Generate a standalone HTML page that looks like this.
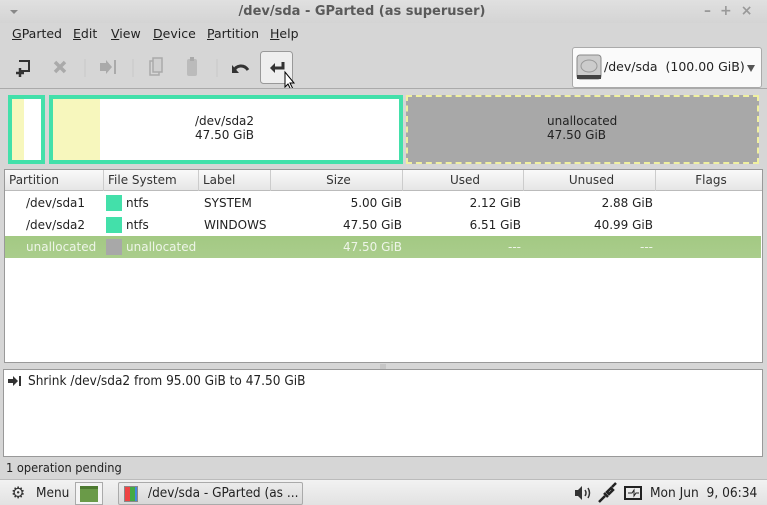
<!DOCTYPE html>
<html><head><meta charset="utf-8"><style>
*{box-sizing:border-box;margin:0;padding:0}
body{width:767px;height:505px;overflow:hidden;background:#d6d6d6;font-family:"DejaVu Sans","Liberation Sans",sans-serif;font-size:12px;color:#222;position:relative}
.a{position:absolute}
.menu span{position:absolute;top:26px;font-size:12.5px;color:#222}
.menu u{text-decoration:underline}
.th{position:absolute;top:0;height:21px;line-height:21px;border-right:1px solid #ccc;padding-left:4px;font-size:12px;color:#333}
.row{position:absolute;left:5px;width:756px;height:22px;line-height:22px;font-size:12px}
.row span{position:absolute}
.r{text-align:right}
.sw{position:absolute;width:16px;height:16px;top:3px}
.tb{font-family:"DejaVu Sans Condensed","DejaVu Sans",sans-serif;font-size:12px}
</style></head><body>
<!-- title -->
<div class="a" style="left:0;top:0;width:767px;height:23px;background:linear-gradient(#e0e0e0,#d4d4d4)"></div>
<div class="a" style="left:10px;top:10px;width:0;height:0;border-left:4px solid transparent;border-right:4px solid transparent;border-top:4px solid #888"></div>
<div class="a" style="left:0;top:4px;width:724px;text-align:center;font-weight:bold;font-size:13px;color:#5a5a5a">/dev/sda - GParted (as superuser)</div>
<div class="a" style="left:704px;top:3px;color:#999;font-size:14px;font-weight:bold;letter-spacing:9px">–+×</div>
<!-- menu -->
<div class="menu">
<span style="left:12px"><u>G</u>Parted</span><span style="left:73px"><u>E</u>dit</span><span style="left:111px"><u>V</u>iew</span><span style="left:153px"><u>D</u>evice</span><span style="left:207px"><u>P</u>artition</span><span style="left:270px"><u>H</u>elp</span>
</div>
<!-- toolbar -->
<svg class="a" style="left:0;top:45px" width="310" height="45">
<g fill="none" stroke="#333" stroke-width="2"><path d="M19 16h10v10h-8"/></g>
<path d="M20 23v9M16 28h8" stroke="#333" stroke-width="2.5"/>
<path d="M55 17l10 10M65 17l-10 10" stroke="#aaa" stroke-width="3.5"/>
<line x1="85" y1="14" x2="85" y2="32" stroke="#c8c8c8"/>
<path d="M100 18h6v-3l6 7-6 7v-3h-6z" fill="#aaa"/><rect x="114" y="15" width="2" height="14" fill="#aaa"/>
<line x1="133" y1="14" x2="133" y2="32" stroke="#c8c8c8"/>
<rect x="150" y="16" width="9" height="14" fill="none" stroke="#aaa" stroke-width="1.5"/><rect x="153" y="13" width="9" height="14" fill="#d0d0d0" stroke="#aaa" stroke-width="1.5"/>
<rect x="187" y="14" width="10" height="17" rx="2" fill="#bbb"/><rect x="190" y="12" width="4" height="4" fill="#aaa"/>
<line x1="217" y1="14" x2="217" y2="32" stroke="#c8c8c8"/>
<path d="M234 26c2-6 10-7 14 -1" fill="none" stroke="#333" stroke-width="3"/><path d="M232 20v8h7z" fill="#333"/>
<rect x="260.5" y="6.5" width="32" height="32" rx="3" fill="#eee" stroke="#999"/>
<path d="M283 17v6h-10" fill="none" stroke="#333" stroke-width="3"/><path d="M275 18l-5 5 5 5z" fill="#333"/>
<path d="M285 27v15l3-3 3 6 2-1-3-6h4z" fill="#fff" stroke="#000"/>
</svg>
<!-- device combo -->
<div class="a" style="left:572px;top:47px;width:190px;height:41px;background:#fafafa;border:1px solid #aaa;border-radius:3px"></div>
<svg class="a" style="left:575px;top:52px" width="30" height="30"><rect x="2" y="3" width="24" height="24" rx="3" fill="#ccc" stroke="#888"/><ellipse cx="14" cy="14" rx="8" ry="6" fill="none" stroke="#999"/><rect x="2" y="23" width="24" height="4" fill="#444"/></svg>
<div class="a" style="left:604px;top:59px;font-size:12.5px">/dev/sda &nbsp;(100.00 GiB)</div>
<div class="a" style="left:747px;top:65px;border-left:4px solid transparent;border-right:4px solid transparent;border-top:7px solid #555"></div>
<div class="a" style="left:0;top:88px;width:767px;height:1px;background:#aaa"></div>
<!-- map -->
<div class="a" style="left:3px;top:89px;width:761px;height:78px;background:#d6d6d6"></div>
<div class="a" style="left:8px;top:95px;width:37px;height:69px;border:4px solid #43e0aa;background:linear-gradient(90deg,#f7f7bd 0 12px,#fff 12px)"></div>
<div class="a" style="left:49px;top:95px;width:354px;height:69px;border:4px solid #43e0aa;background:linear-gradient(90deg,#f7f7bd 0 47px,#fff 47px)"></div>
<div class="a" style="left:195px;top:114px;font-size:12px;line-height:14px">/dev/sda2<br>47.50 GiB</div>
<div class="a" style="left:406px;top:95px;width:353px;height:69px;border:2px dashed #f0f0a0;background:#a8a8a8"></div>
<div class="a" style="left:547px;top:114px;font-size:12px;line-height:14px">unallocated<br>47.50 GiB</div>
<!-- table -->
<div class="a" style="left:4px;top:169px;width:759px;height:194px;background:#fff;border:1px solid #999"></div>
<div class="a" style="left:5px;top:170px;width:757px;height:21px;background:linear-gradient(#fafafa,#e6e6e6);border-bottom:1px solid #bbb">
<div class="th" style="left:0;width:99px">Partition</div>
<div class="th" style="left:99px;width:95px">File System</div>
<div class="th" style="left:194px;width:72px">Label</div>
<div class="th" style="left:266px;width:132px;text-align:center">Size</div>
<div class="th" style="left:398px;width:121px;text-align:center">Used</div>
<div class="th" style="left:519px;width:132px;text-align:center">Unused</div>
<div class="th" style="left:651px;width:106px;text-align:center;border:0">Flags</div>
</div>
<div class="row" style="top:192px"><span style="left:21px">/dev/sda1</span><i class="sw" style="left:101px;background:#43e0aa"></i><span style="left:121px">ntfs</span><span style="left:199px">SYSTEM</span><span class="r" style="right:359px">5.00 GiB</span><span class="r" style="right:240px">2.12 GiB</span><span class="r" style="right:108px">2.88 GiB</span></div>
<div class="row" style="top:214px"><span style="left:21px">/dev/sda2</span><i class="sw" style="left:101px;background:#43e0aa"></i><span style="left:121px">ntfs</span><span style="left:199px">WINDOWS</span><span class="r" style="right:359px">47.50 GiB</span><span class="r" style="right:240px">6.51 GiB</span><span class="r" style="right:108px">40.99 GiB</span></div>
<div class="row" style="top:236px;background:linear-gradient(#a3c983,#aacd8c);color:#eef5e8"><span style="left:21px">unallocated</span><i class="sw" style="left:101px;background:#a8a8a8"></i><span style="left:121px">unallocated</span><span class="r" style="right:359px">47.50 GiB</span><span class="r" style="right:240px">---</span><span class="r" style="right:108px">---</span></div>
<div class="a" style="left:380px;top:364px;font-size:6px;color:#999">|||</div>
<!-- ops -->
<div class="a" style="left:3px;top:369px;width:760px;height:88px;background:#fff;border:1px solid #999"></div>
<svg class="a" style="left:7px;top:374px" width="16" height="14"><path d="M1 5h5v-3l5 5-5 5v-3h-5z" fill="#333"/><rect x="12" y="2" width="2" height="10" fill="#333"/></svg>
<div class="a tb" style="left:28px;top:373px;font-size:13.5px">Shrink /dev/sda2 from 95.00 GiB to 47.50 GiB</div>
<div class="a tb" style="left:6px;top:460px;font-size:12.7px">1 operation pending</div>
<!-- taskbar -->
<div class="a" style="left:0;top:479px;width:767px;height:26px;background:linear-gradient(#f2f2f2,#e2e2e2);border-top:1px solid #bbb"></div>
<div class="a" style="left:11px;top:483px;font-size:16px;color:#333">⚙</div>
<div class="a tb" style="left:36px;top:485px;font-size:13.5px">Menu</div>
<div class="a" style="left:75px;top:482px;width:28px;height:23px;border:1px solid #aaa;background:#f4f4f4"><div style="margin:3px 4px;height:16px;background:#6a9a48;border-top:3px solid #4d7a30"></div></div>
<div class="a" style="left:118px;top:482px;width:185px;height:23px;border:1px solid #aaa;border-radius:2px;background:linear-gradient(#ececec,#d8d8d8)"></div>
<div class="a" style="left:124px;top:486px;width:14px;height:16px;background:linear-gradient(90deg,#e44 0 5px,#4a4 5px 10px,#48d 10px);border:1px solid #888"></div>
<div class="a tb" style="left:148px;top:485px;font-size:13.5px">/dev/sda - GParted (as ...</div>
<svg class="a" style="left:573px;top:485px" width="22" height="16"><path d="M2 5h3l4-4v14l-4-4h-3z" fill="#333"/><path d="M12 5q2 3 0 6M15 3q3 5 0 10" stroke="#333" stroke-width="1.5" fill="none"/></svg>
<svg class="a" style="left:596px;top:482px" width="22" height="22"><path d="M3 20l6-6M8 11l4 4M11 10l4-4 2 2-4 4zM16 5l4-4" stroke="#222" stroke-width="2.5" fill="none"/></svg>
<svg class="a" style="left:624px;top:485px" width="20" height="16"><rect x="1" y="2" width="16" height="12" fill="none" stroke="#222" stroke-width="2"/><path d="M4 8h4l2-3v6l2-3h3" stroke="#222" fill="none"/></svg>
<div class="a tb" style="left:650px;top:485px;font-size:13.6px">Mon Jun &nbsp;9, 06:34</div>
</body></html>
